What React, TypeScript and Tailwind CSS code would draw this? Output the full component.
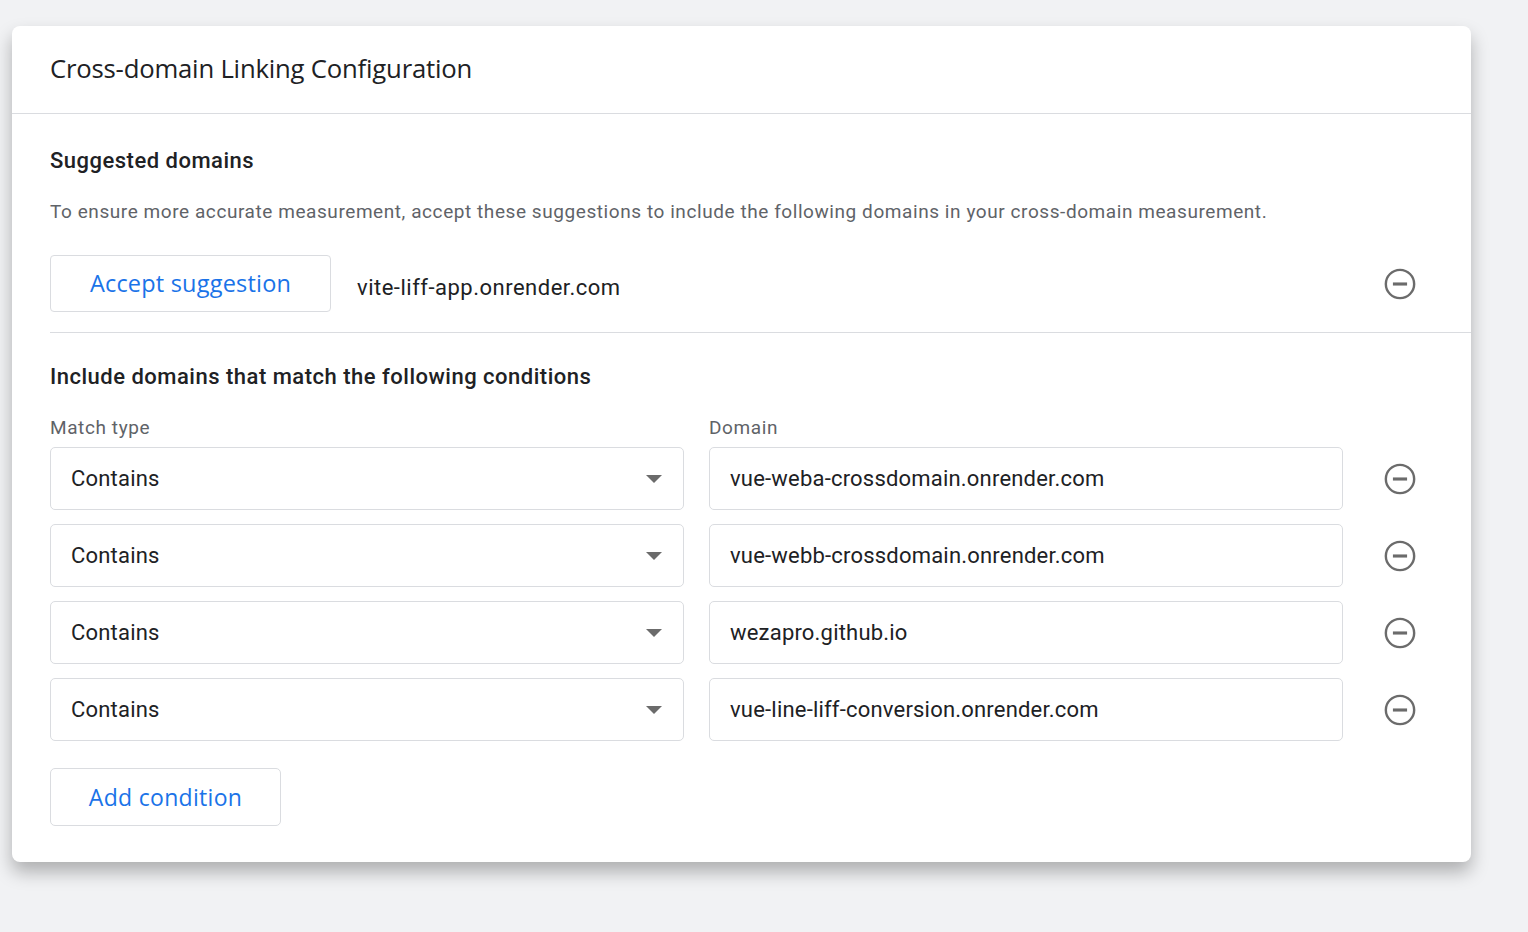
const MinusCircle = () => (
  <svg width="34" height="34" viewBox="0 0 24 24" className="text-[#6b6b6b]">
    <circle cx="12" cy="12" r="10" fill="none" stroke="currentColor" strokeWidth="1.7" />
    <path d="M7 12h10" stroke="currentColor" strokeWidth="2.2" />
  </svg>
);

const rows = [
  "vue-weba-crossdomain.onrender.com",
  "vue-webb-crossdomain.onrender.com",
  "wezapro.github.io",
  "vue-line-liff-conversion.onrender.com",
];

const App = () => {
  return (
    <div className="min-h-[932px] bg-[#f1f2f4] pt-[26px] pl-3 pr-[57px] font-['Roboto',sans-serif]">
      <div className="bg-white rounded-lg shadow-[0_10px_18px_rgba(0,0,0,0.28)] h-[836px]">
        {/* header */}
        <div className="h-[88px] border-b border-[#dadce0] flex items-center px-[38px]">
          <h1 className="text-[25.7px] text-[#202124] font-['Open_Sans',sans-serif] tracking-[-0.2px]">
            Cross-domain Linking Configuration
          </h1>
        </div>

        <div className="pl-[38px]">
          <h2 className="pt-[33px] text-[22px] font-medium text-[#202124] leading-[28px] tracking-[0.5px]">
            Suggested domains
          </h2>
          <p className="mt-[25px] text-[19px] text-[#5f6368] tracking-[0.57px] leading-[24px]">
            To ensure more accurate measurement, accept these suggestions to include the following domains in your cross-domain measurement.
          </p>

          <div className="mt-[31px] flex items-center border-b border-[#dadce0] pb-[20px]">
            <button className="w-[281px] h-[57px] border border-[#dadce0] rounded-[4px] text-[23.5px] text-[#1a73e8] font-['Open_Sans',sans-serif] tracking-[0.2px]">
              Accept suggestion
            </button>
            <span className="ml-[26px] mt-[7px] text-[22px] text-[#202124] tracking-[0.5px]">vite-liff-app.onrender.com</span>
            <div className="ml-auto mr-[54px]">
              <MinusCircle />
            </div>
          </div>

          <h2 className="pt-[30px] text-[22px] font-medium text-[#202124] leading-[28px] tracking-[0.5px]">
            Include domains that match the following conditions
          </h2>

          <div className="mt-[26px] flex text-[19px] text-[#5f6368] tracking-[0.6px] leading-[22px]">
            <span className="w-[659px]">Match type</span>
            <span>Domain</span>
          </div>

          <div className="mt-[8px] flex flex-col gap-[14px]">
            {rows.map((d) => (
              <div key={d} className="flex items-center">
                <div className="w-[634px] h-[63px] border border-[#dadce0] rounded-[5px] flex items-center pl-[20px] pr-[20px] text-[22px] text-[#202124] tracking-[0.2px]">
                  <span>Contains</span>
                  <svg width="18" height="10" viewBox="0 0 18 10" className="ml-auto">
                    <path d="M1 1h16L9 9z" fill="#6b6b6b" />
                  </svg>
                </div>
                <div className="ml-[25px] w-[634px] h-[63px] border border-[#dadce0] rounded-[5px] flex items-center pl-[20px] text-[22px] text-[#202124] tracking-[0.2px]">
                  {d}
                </div>
                <div className="ml-[40px]">
                  <MinusCircle />
                </div>
              </div>
            ))}
          </div>

          <button className="mt-[27px] w-[231px] h-[58px] border border-[#dadce0] rounded-[5px] text-[23px] text-[#1a73e8] font-['Open_Sans',sans-serif] tracking-[0.3px]">
            Add condition
          </button>
        </div>
      </div>
    </div>
  );
};

export default App;
